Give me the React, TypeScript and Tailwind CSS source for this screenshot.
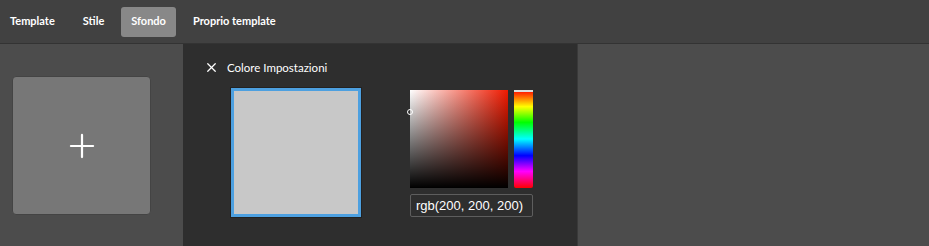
import { X, Plus } from "lucide-react";

function TopBar() {
  return (
    <div className="h-[44px] bg-[#414141] border-b border-[#333] flex items-center pl-[10px] text-white text-[11px] font-bold">
      <span>Template</span>
      <span className="ml-[28px]">Stile</span>
      <span className="ml-[17px] h-[30px] px-[10px] flex items-center rounded-[3px] bg-[#888]">Sfondo</span>
      <span className="ml-[17px]">Proprio template</span>
    </div>
  );
}

function ColorPicker() {
  return (
    <div className="flex flex-col gap-[6px] pt-[3px]">
      <div className="flex gap-[6px]">
        <div className="relative w-[98px] h-[98px] bg-[linear-gradient(to_top,#000,transparent),linear-gradient(to_right,#fff,#f01a00)]">
          <div className="absolute left-[-3px] top-[19px] w-[6px] h-[6px] rounded-full border border-white" />
        </div>
        <div className="relative w-[19px] h-[98px] rounded-[2px] bg-[linear-gradient(to_bottom,#f00,#ff0_17%,#0f0_33%,#0ff_50%,#00f_67%,#f0f_83%,#f00)]">
          <div className="absolute left-0 right-0 top-0 h-[2px] bg-[#ddd]" />
        </div>
      </div>
      <div className="w-[123px] h-[23px] border border-[#5e5e5e] rounded-[2px] flex items-center px-[5px] text-white text-[13px] font-['Liberation_Sans',sans-serif]">
        rgb(200, 200, 200)
      </div>
    </div>
  );
}

export default function App() {
  return (
    <div className="w-[929px] h-[246px] overflow-hidden font-['Lato',sans-serif] bg-[#4c4c4c]">
      <TopBar />
      <div className="flex h-[202px]">
        <div className="w-[183px] bg-[#4c4c4c] pl-[12px] pt-[32px]">
          <div className="w-[139px] h-[139px] rounded-[4px] bg-[#777] border border-[#444] flex items-center justify-center">
            <Plus className="text-white" size={38} strokeWidth={1.4} />
          </div>
        </div>
        <div className="w-[394px] bg-[#2e2e2e] pl-[21px] pt-[15px]">
          <div className="flex items-center gap-[8px] text-white text-[11.5px]">
            <X size={15} strokeWidth={2} />
            <span>Colore Impostazioni</span>
          </div>
          <div className="flex gap-[48px] pl-[26px] pt-[11px]">
            <div className="w-[132px] h-[131px] border border-[#222]">
              <div className="w-full h-full border-[3px] border-[#4da0e0] bg-[#c8c8c8]" />
            </div>
            <ColorPicker />
          </div>
        </div>
        <div className="flex-1 bg-[#4c4c4c] border-l border-[#3a3a3a]" />
      </div>
    </div>
  );
}
